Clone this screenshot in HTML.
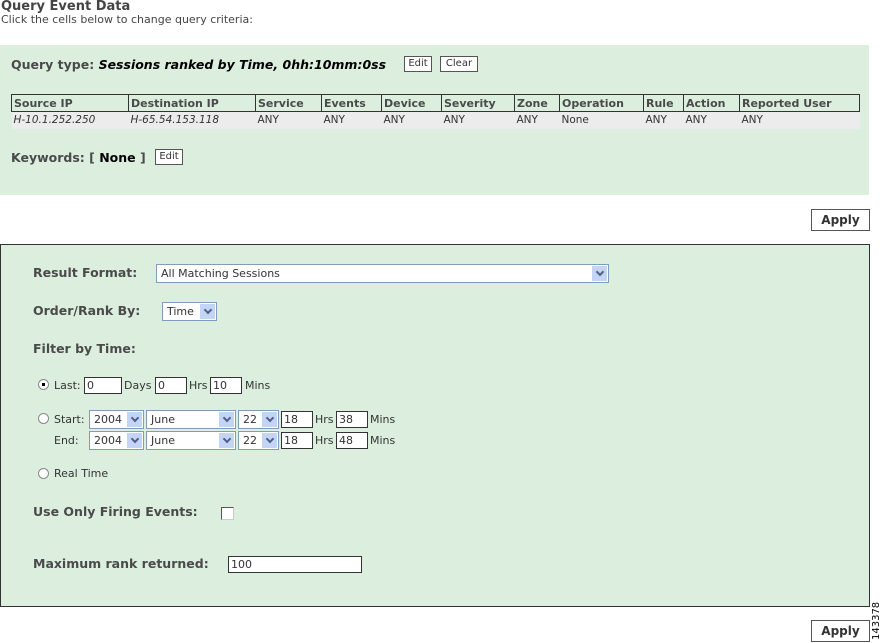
<!DOCTYPE html>
<html><head><style>
*{box-sizing:border-box;margin:0;padding:0}
body{width:886px;height:643px;background:#fff;position:relative;font-family:"DejaVu Sans",Verdana,sans-serif;font-size:11px;color:#333;overflow:hidden}
.a{position:absolute;white-space:nowrap}
.g{background:#dcefdf}
.lbl{font-weight:bold;font-size:12.5px;color:#4a4a4a}
.btn{position:absolute;border:1px solid #555;background:#fff;font-size:10px;text-align:center;color:#333}
.ab{position:absolute;border:1px solid #555;background:#fff;font-weight:bold;font-size:12px;text-align:center;line-height:20px;color:#333;width:59px;height:22px}
.inp{position:absolute;border:1px solid #333;background:#fff;height:17px;font-size:11px;padding-left:2px;line-height:15px}
.sel{position:absolute;border:1px solid #7f9db9;background:#fff;height:19px;font-size:11px;padding-left:4px;line-height:17px}
.sel::after{content:"";position:absolute;right:1px;top:1px;width:15px;height:15px;background:#c4d4f4}
.sel i{position:absolute;right:5px;top:4px;width:6px;height:6px;border-right:2px solid #4d6185;border-bottom:2px solid #4d6185;transform:rotate(45deg);z-index:2}
.rad{position:absolute;width:11px;height:11px;border-radius:50%;border:1px solid #888;background:#fff}
table{border-collapse:collapse}
td,th{font-size:10.5px;padding:0 2px;text-align:left}
th{border:1px solid #333;font-weight:bold;color:#4a4a4a;height:17px;font-size:11px}
td{height:17px;background:#ececec}
</style></head><body>
<div class="a" style="left:1px;top:-1px;font-weight:bold;font-size:13px;color:#444">Query Event Data</div>
<div class="a" style="left:1px;top:13px;color:#444">Click the cells below to change query criteria:</div>

<div class="a g" style="left:0;top:45px;width:869px;height:150px"></div>
<div class="a lbl" style="left:11px;top:57px">Query type: <span style="font-style:italic;color:#000;font-size:12.5px">Sessions ranked by Time, 0hh:10mm:0ss</span></div>
<div class="btn" style="left:404px;top:56px;width:28px;height:16px;line-height:14px">Edit</div>
<div class="btn" style="left:440px;top:56px;width:38px;height:16px;line-height:14px">Clear</div>
<table class="a" style="left:11px;top:94px;width:849px">
<tr><th style="width:117px">Source IP</th><th style="width:127px">Destination IP</th><th style="width:66px">Service</th><th style="width:60px">Events</th><th style="width:60px">Device</th><th style="width:73px">Severity</th><th style="width:45px">Zone</th><th style="width:84px">Operation</th><th style="width:40px">Rule</th><th style="width:56px">Action</th><th>Reported User</th></tr>
<tr><td><i>H-10.1.252.250</i></td><td><i>H-65.54.153.118</i></td><td>ANY</td><td>ANY</td><td>ANY</td><td>ANY</td><td>ANY</td><td>None</td><td>ANY</td><td>ANY</td><td>ANY</td></tr>
</table>
<div class="a lbl" style="left:11px;top:150px">Keywords: [ <span style="color:#000">None</span> ]</div>
<div class="btn" style="left:155px;top:149px;width:28px;height:16px;line-height:14px">Edit</div>

<div class="ab" style="left:811px;top:209px">Apply</div>

<div class="a g" style="left:0;top:244px;width:870px;height:363px;border:1px solid #333"></div>
<div class="a lbl" style="left:33px;top:265px">Result Format:</div>
<div class="sel" style="left:156px;top:264px;width:453px">All Matching Sessions<i></i></div>
<div class="a lbl" style="left:33px;top:303px">Order/Rank By:</div>
<div class="sel" style="left:162px;top:302px;width:55px">Time<i></i></div>
<div class="a lbl" style="left:33px;top:341px">Filter by Time:</div>

<div class="rad" style="left:38px;top:379px"><div style="position:absolute;left:3px;top:3px;width:3px;height:3px;background:#000"></div></div>
<div class="a" style="left:54px;top:379px">Last:</div>
<div class="inp" style="left:84px;top:377px;width:38px">0</div>
<div class="a" style="left:124px;top:379px">Days</div>
<div class="inp" style="left:155px;top:377px;width:32px">0</div>
<div class="a" style="left:189px;top:379px">Hrs</div>
<div class="inp" style="left:210px;top:377px;width:32px">10</div>
<div class="a" style="left:245px;top:379px">Mins</div>

<div class="rad" style="left:38px;top:413px"></div>
<div class="a" style="left:54px;top:413px">Start:</div>
<div class="a" style="left:54px;top:434px">End:</div>
<div class="sel" style="left:89px;top:410px;width:55px">2004<i></i></div>
<div class="sel" style="left:146px;top:410px;width:90px">June<i></i></div>
<div class="sel" style="left:238px;top:410px;width:41px">22<i></i></div>
<div class="inp" style="left:281px;top:411px;width:32px">18</div>
<div class="a" style="left:315px;top:413px">Hrs</div>
<div class="inp" style="left:336px;top:411px;width:32px">38</div>
<div class="a" style="left:370px;top:413px">Mins</div>
<div class="sel" style="left:89px;top:431px;width:55px">2004<i></i></div>
<div class="sel" style="left:146px;top:431px;width:90px">June<i></i></div>
<div class="sel" style="left:238px;top:431px;width:41px">22<i></i></div>
<div class="inp" style="left:281px;top:432px;width:32px">18</div>
<div class="a" style="left:315px;top:434px">Hrs</div>
<div class="inp" style="left:336px;top:432px;width:32px">48</div>
<div class="a" style="left:370px;top:434px">Mins</div>

<div class="rad" style="left:38px;top:468px"></div>
<div class="a" style="left:54px;top:467px">Real Time</div>

<div class="a lbl" style="left:33px;top:504px">Use Only Firing Events:</div>
<div class="a" style="left:221px;top:507px;width:13px;height:13px;border:1px solid #555;border-right-color:#ccc;border-bottom-color:#ccc;background:#fff"></div>
<div class="a lbl" style="left:33px;top:556px">Maximum rank returned:</div>
<div class="inp" style="left:228px;top:556px;width:134px">100</div>

<div class="ab" style="left:811px;top:620px">Apply</div>
<div class="a" style="left:871px;top:640px;transform:rotate(-90deg);transform-origin:0 0;font-size:10px;color:#000">143378</div>
</body></html>
